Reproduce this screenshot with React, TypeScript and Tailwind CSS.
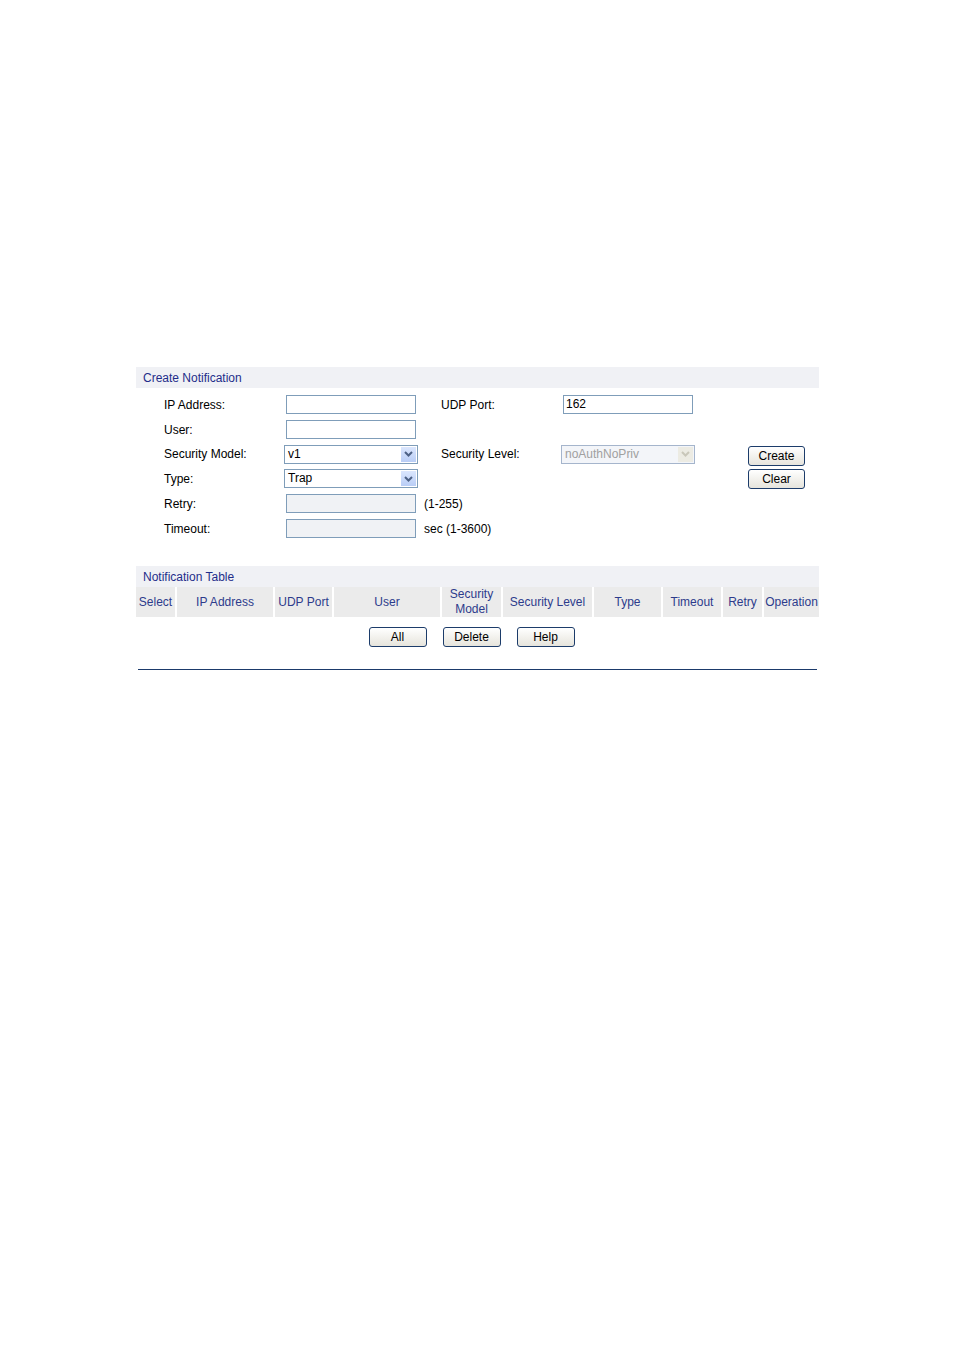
import type { ReactNode } from "react";

const font = { fontFamily: '"Liberation Sans", Arial, sans-serif' };

function TextInput(props: { value?: string; disabled?: boolean }) {
  return (
    <div
      className={`h-[19px] w-[130px] border border-[#7f9db9] px-[2px] text-[12px] leading-[17px] text-black ${
        props.disabled ? "bg-[#f0f2f5]" : "bg-white"
      }`}
    >
      {props.value}
    </div>
  );
}

function Select(props: { value: string; disabled?: boolean }) {
  const { value, disabled } = props;
  return (
    <div
      className={`ml-[-2px] flex h-[19px] w-[134px] items-center border ${
        disabled ? "border-[#a5b5cc] bg-[#f3f5f9] text-[#a0a0a0]" : "border-[#7f9db9] bg-white text-black"
      }`}
    >
      <span className="flex-1 px-[3px] text-[12px] leading-[17px]">{value}</span>
      <span
        className={`m-px flex h-[15px] w-[15px] items-center justify-center ${
          disabled ? "bg-[#ecebe3]" : "bg-gradient-to-b from-[#dbe6fd] to-[#b9cdf6]"
        }`}
      >
        <svg width="9" height="6" viewBox="0 0 9 6">
          <path
            d="M1 1l3.5 3.5L8 1"
            fill="none"
            stroke={disabled ? "#c9c7ba" : "#4d6185"}
            strokeWidth="2"
          />
        </svg>
      </span>
    </div>
  );
}

function Btn(props: { children: ReactNode }) {
  return (
    <button
      type="button"
      className="h-[20px] w-[58px] rounded-[3px] border border-[#1c3c6a] bg-gradient-to-b from-white to-[#e6e4dc] text-[12px] leading-[18px] text-black"
    >
      {props.children}
    </button>
  );
}

function Label(props: { children: ReactNode; className?: string }) {
  return (
    <div className={`flex items-center text-[12px] text-black ${props.className ?? ""}`}>{props.children}</div>
  );
}

const columns = [
  { label: "Select", w: "w-[41px]" },
  { label: "IP Address", w: "w-[98px]" },
  { label: "UDP Port", w: "w-[59px]" },
  { label: "User", w: "w-[108px]" },
  { label: "Security Model", w: "w-[61px]" },
  { label: "Security Level", w: "w-[91px]" },
  { label: "Type", w: "w-[69px]" },
  { label: "Timeout", w: "w-[60px]" },
  { label: "Retry", w: "w-[41px]" },
  { label: "Operation", w: "w-[55px]" },
];

export default function App() {
  return (
    <div className="min-h-[1350px] bg-white pt-[367px]" style={font}>
      <div className="ml-[136px] w-[683px]">
        <div className="h-[21px] bg-[#f0f1f5] pl-[7px] pt-[2px] text-[12px] leading-[19px] text-[#1f2d8a]">
          Create Notification
        </div>

        <div className="mt-[4px] grid grid-cols-[122px_138px_17px_122px_185px_57px] grid-rows-[25px_25px_24px_25px_25px_25px] pl-[28px]">
          {/* row 1 */}
          <Label>IP Address:</Label>
          <div className="flex items-center">
            <TextInput />
          </div>
          <div />
          <Label>UDP Port:</Label>
          <div className="flex items-center">
            <TextInput value="162" />
          </div>
          <div />

          {/* row 2 */}
          <Label>User:</Label>
          <div className="flex items-center">
            <TextInput />
          </div>
          <div className="col-span-4" />

          {/* row 3 */}
          <Label>Security Model:</Label>
          <div className="flex items-center">
            <Select value="v1" />
          </div>
          <div />
          <Label>Security Level:</Label>
          <div className="flex items-center">
            <Select value="noAuthNoPriv" disabled />
          </div>
          <div className="flex items-center pt-[3px]">
            <Btn>Create</Btn>
          </div>

          {/* row 4 */}
          <Label>Type:</Label>
          <div className="flex items-center">
            <Select value="Trap" />
          </div>
          <div className="col-span-3" />
          <div className="flex items-center">
            <Btn>Clear</Btn>
          </div>

          {/* row 5 */}
          <Label>Retry:</Label>
          <div className="flex items-center">
            <TextInput disabled />
          </div>
          <Label className="col-span-4">(1-255)</Label>

          {/* row 6 */}
          <Label>Timeout:</Label>
          <div className="flex items-center">
            <TextInput disabled />
          </div>
          <Label className="col-span-4">sec (1-3600)</Label>
        </div>

        <div className="mt-[25px] h-[21px] bg-[#f0f1f5] pl-[7px] pt-[1px] text-[12px] leading-[20px] text-[#1f2d8a]">
          Notification Table
        </div>

        <div className="flex h-[30px]">
          {columns.map((c, i) => (
            <div
              key={c.label}
              className={`${c.w} flex items-center justify-center bg-[#ebebeb] text-center text-[12px] leading-[15px] text-[#2d3b8c] ${
                i < columns.length - 1 ? "border-r-2 border-white" : ""
              }`}
            >
              {c.label === "Security Model" ? (
                <span>
                  Security
                  <br />
                  Model
                </span>
              ) : (
                c.label
              )}
            </div>
          ))}
        </div>

        <div className="mt-[10px] flex justify-center gap-[16px] pr-[12px]">
          <Btn>All</Btn>
          <Btn>Delete</Btn>
          <Btn>Help</Btn>
        </div>

        <div className="mx-[2px] mt-[22px] h-px bg-[#1b3a6b]" />
      </div>
    </div>
  );
}
